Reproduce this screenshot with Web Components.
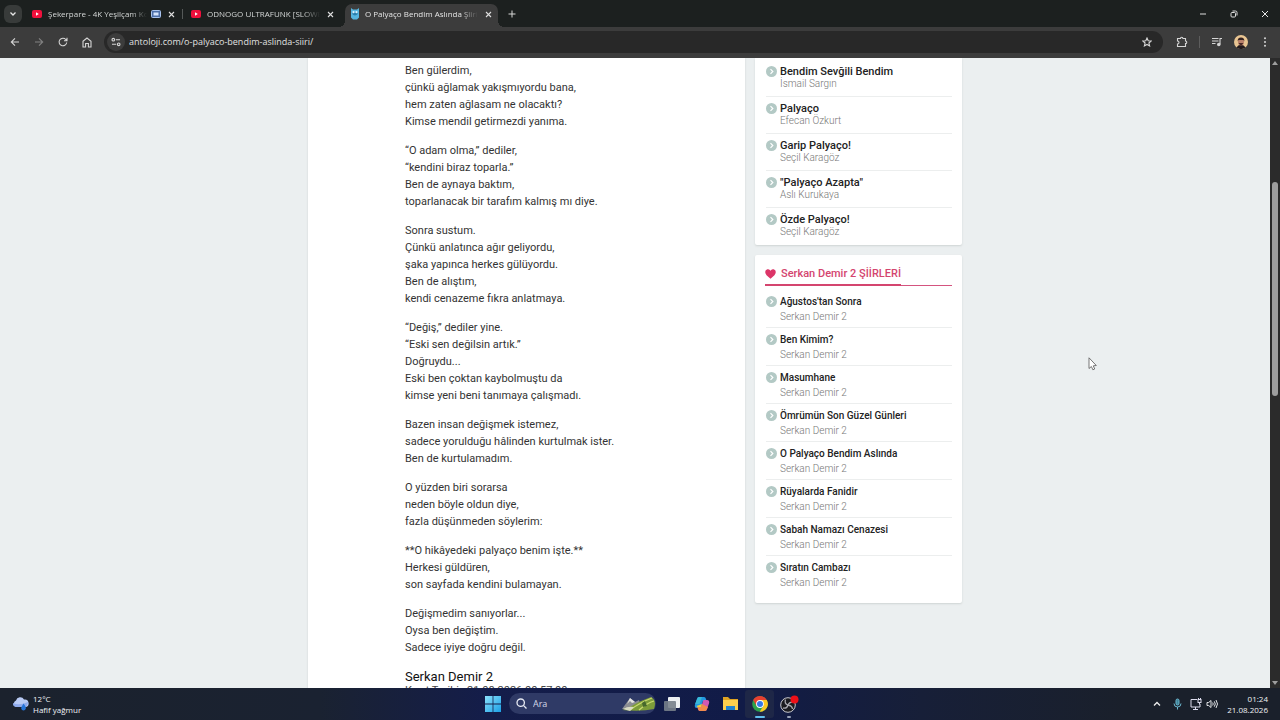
<!DOCTYPE html>
<html lang="tr">
<head>
<meta charset="utf-8">
<title>O Palyaço Bendim Aslında Şiiri</title>
<style>
html,body{margin:0;height:100%}
body{font-family:Roboto,"Open Sans",sans-serif;overflow:hidden}
</style>
</head>
<body>
<desktop-screen></desktop-screen>
<script>
const define = (name, html, setup) => {
  const template = document.createElement('template');
  template.innerHTML = html.trim();
  customElements.define(name, class extends HTMLElement {
    constructor() {
      super();
      this.attachShadow({ mode: 'open' }).append(template.content.cloneNode(true));
    }
    connectedCallback() { if (setup) setup(this, this.shadowRoot); }
  });
};

const youtube = '<svg width="10" height="8" viewBox="0 0 10 8"><rect width="10" height="8" rx="2" fill="#f0103c"/><path d="M4 2.3v3.4L6.8 4z" fill="#fff"/></svg>';
const owl = '<svg width="10" height="12" viewBox="0 0 10 12"><path d="M1 0l2 1.500h4L9 0v4.500L9 9.500 7 11.500h-4L1 9.500 1 4.500z" fill="#56b4de"/><path d="M2 4.200h6l-.8 2.500L5 7.500 2.800 6.700z" fill="#2a7fae"/><circle cx="3.500" cy="4.200" r="1.100" fill="#d9f2ff"/><circle cx="6.500" cy="4.200" r="1.100" fill="#d9f2ff"/></svg>';

define('browser-tab', `
<style>
:host{display:flex;align-items:center;box-sizing:border-box;width:159px;height:23px;padding:0 2px 3px 10px;color:#d4d7d6;font:8px "Open Sans",sans-serif;position:relative;border-radius:7px 7px 0 0}
:host([active]){background:#3c3c3c;width:153px;padding-left:5px;color:#e4e4e4;margin-left:5px}
:host([active])::before,:host([active])::after{content:"";position:absolute;bottom:0;width:6px;height:6px}
:host([active])::before{left:-6px;background:radial-gradient(circle at 0 0,transparent 6px,#3c3c3c 6px)}
:host([active])::after{right:-6px;background:radial-gradient(circle at 100% 0,transparent 6px,#3c3c3c 6px)}
.icon{display:flex;width:10px;margin-right:6px}
:host([active]) .icon{margin-right:5px}
.title{all:unset;flex:1;min-width:0;overflow:hidden;white-space:nowrap;line-height:16px;-webkit-mask-image:linear-gradient(90deg,#000 85%,transparent);mask-image:linear-gradient(90deg,#000 85%,transparent)}
.close{all:unset;display:flex;padding:4px;margin-left:3px}
.pip{display:none;margin-left:4px}
:host([pip]) .pip{display:block}
</style>
<span class="icon"><slot name="icon"></slot></span>
<button class="title"><slot></slot></button>
<svg class="pip" width="10" height="8" viewBox="0 0 10 8"><rect x=".5" y=".5" width="9" height="7" rx="1" fill="#4c6ea8" stroke="#a9c3ee"/><rect x="2.500" y="2.500" width="5" height="3" fill="#d4e3fc"/></svg>
<button class="close" aria-label="Sekmeyi kapat"><svg width="7" height="7" viewBox="0 0 7 7"><path d="M1 1l5 5M6 1L1 6" stroke="#dedede" stroke-width="1.100"/></svg></button>`);

define('tab-strip', `
<style>
:host{display:flex;align-items:flex-end;height:27px;background:#1c201f;padding-left:4px;box-sizing:border-box}
button{all:unset;display:flex;align-items:center;justify-content:center}
.menu{width:18px;height:18px;background:#383b3a;border-radius:6px;align-self:center}
.tabs{display:flex;align-items:center}
.sep{width:1px;height:10px;background:#555958;margin:0 -2px 3px 1px}
.new{width:28px;height:27px}
.space{flex:1}
.win{width:31px;height:27px}
.icon{display:flex}
</style>
<button class="menu" aria-label="Sekmelerde ara"><svg width="8" height="6" viewBox="0 0 8 6"><path d="M1.500 1.500L4 4l2.500-2.500" fill="none" stroke="#e6e6e6" stroke-width="1.300"/></svg></button>
<div class="tabs">
<browser-tab pip><span slot="icon" class="icon">${youtube}</span>Şekerpare - 4K Yeşilçam Komedi</browser-tab><i class="sep"></i>
<browser-tab><span slot="icon" class="icon">${youtube}</span>ODNOGO ULTRAFUNK [SLOWED]</browser-tab>
<browser-tab active><span slot="icon" class="icon">${owl}</span>O Palyaço Bendim Aslında Şiiri -</browser-tab>
</div>
<button class="new" aria-label="Yeni sekme"><svg width="8" height="8" viewBox="0 0 8 8"><path d="M4 .5v7M.5 4h7" stroke="#d8d8d8"/></svg></button>
<span class="space"></span>
<button class="win" aria-label="Küçült"><svg width="8" height="8" viewBox="0 0 8 8"><path d="M1 4h6" stroke="#ddd"/></svg></button>
<button class="win" aria-label="Önceki boyut"><svg width="8" height="8" viewBox="0 0 8 8" fill="none" stroke="#ddd"><rect x="1" y="2.500" width="4.500" height="4.500" rx="1"/><path d="M2.500 1h3Q7 1 7 2.500v3"/></svg></button>
<button class="win" aria-label="Kapat"><svg width="8" height="8" viewBox="0 0 8 8"><path d="M1 1l6 6M7 1L1 7" stroke="#e6e6e6"/></svg></button>`);

define('browser-toolbar', `
<style>
:host{display:flex;align-items:center;height:31px;background:#3c3c3c;padding:0 3px 1px;box-sizing:border-box}
button{all:unset;display:flex;align-items:center;justify-content:center;width:24px;height:24px}
.bar{flex:1;display:flex;align-items:center;height:22px;background:#282828;border-radius:11px;margin:0 7px 0 5px;padding-left:3px;min-width:0}
.site{width:18px;height:18px;border-radius:9px;background:#3c3c3c}
input{all:unset;flex:1;min-width:0;margin-left:4px;color:#e0e0e0;font:9px/16px "Open Sans",sans-serif}
.star{width:32px}
.sep{width:1px;height:12px;background:#5d5d5d;margin:0 5px}
svg{fill:none;stroke:#d6d6d6;stroke-width:1.100}
</style>
<button aria-label="Geri"><svg width="10" height="10" viewBox="0 0 10 10"><path d="M9 5H1.500M5 1.300L1.300 5 5 8.700"/></svg></button>
<button aria-label="İleri"><svg width="10" height="10" viewBox="0 0 10 10" style="stroke:#828282"><path d="M1 5h7.500M5 1.300L8.700 5 5 8.700"/></svg></button>
<button aria-label="Yenile"><svg width="10" height="10" viewBox="0 0 10 10"><path d="M8.700 5.500A3.800 3.800 0 1 1 7.800 2.500L9 3.700M9 .7v3H6"/></svg></button>
<button aria-label="Ana sayfa"><svg width="10" height="11" viewBox="0 0 10 11"><path d="M1 4.200L5 1l4 3.200V10H6.400V6.500H3.600V10H1z"/></svg></button>
<div class="bar">
<button class="site" aria-label="Site bilgileri"><svg width="10" height="10" viewBox="0 0 10 10"><circle cx="2.300" cy="2.700" r="1.300"/><path d="M4.800 2.700H9M1 7.300h4.200"/><circle cx="7.700" cy="7.300" r="1.300"/></svg></button>
<input aria-label="Adres" value="antoloji.com/o-palyaco-bendim-aslinda-siiri/">
<button class="star" aria-label="Yer işareti"><svg width="10" height="10" viewBox="0 0 10 10"><path d="M5 1l1.200 2.700 3 .3-2.300 2 .7 2.900L5 7.400 2.400 8.900l.7-2.900L.8 4l3-.3z"/></svg></button>
</div>
<button aria-label="Uzantılar"><svg width="12" height="12" viewBox="0 0 12 12"><path d="M1.500 2.500H4.500a1.200 1.200 0 0 1 2.400 0H9.500V5a1.300 1.300 0 0 1 0 2.600V10.500H1.500V8a1.500 1.500 0 0 0 0-3z"/></svg></button>
<i class="sep"></i>
<button aria-label="Medya"><svg width="12" height="10" viewBox="0 0 12 10"><path d="M1 1.500h6.500M1 4h6.500M1 6.500h3.500M9 7.500V1.500h2"/><circle cx="7.800" cy="7.500" r="1.200" fill="#d6d6d6"/></svg></button>
<button aria-label="Profil"><svg width="14" height="14" viewBox="0 0 14 14" style="stroke:none"><circle cx="7" cy="7" r="7" fill="#e9c592"/><path d="M2.500 12.400Q4 9.500 7 9.700t4.500 2.700A7 7 0 0 1 2.500 12.400z" fill="#221a1c"/><ellipse cx="7" cy="6.800" rx="3" ry="3.700" fill="#b9806a"/><path d="M3.700 6.500Q3.400 2.500 7 2.500t3.300 4L9.500 5h-5z" fill="#352322"/><path d="M4.500 8h5L7 11z" fill="#4b2b28"/></svg></button>
<button aria-label="Menü"><svg width="4" height="10" viewBox="0 0 4 10" style="fill:#d6d6d6;stroke:none"><circle cx="2" cy="1.300" r="1"/><circle cx="2" cy="5" r="1"/><circle cx="2" cy="8.700" r="1"/></svg></button>`);

define('poem-stanza', `
<style>:host{display:block;white-space:pre-line;margin-bottom:12px;font-size:11px;line-height:17px;color:#333}</style><slot></slot>`);

define('poem-card', `
<style>
:host{display:block;background:#fff;padding:4px 97px 0;box-shadow:0 0 2px #cfd4d4;min-width:0}
h2{margin:0;font:400 13px/18px Roboto,sans-serif;color:#111}
p{margin:0;font-size:11px;line-height:10px;color:#444}
</style>
<poem-stanza>Ben gülerdim,
çünkü ağlamak yakışmıyordu bana,
hem zaten ağlasam ne olacaktı?
Kimse mendil getirmezdi yanıma.</poem-stanza>
<poem-stanza>“O adam olma,” dediler,
“kendini biraz toparla.”
Ben de aynaya baktım,
toparlanacak bir tarafım kalmış mı diye.</poem-stanza>
<poem-stanza>Sonra sustum.
Çünkü anlatınca ağır geliyordu,
şaka yapınca herkes gülüyordu.
Ben de alıştım,
kendi cenazeme fıkra anlatmaya.</poem-stanza>
<poem-stanza>“Değiş,” dediler yine.
“Eski sen değilsin artık.”
Doğruydu...
Eski ben çoktan kaybolmuştu da
kimse yeni beni tanımaya çalışmadı.</poem-stanza>
<poem-stanza>Bazen insan değişmek istemez,
sadece yorulduğu hâlinden kurtulmak ister.
Ben de kurtulamadım.</poem-stanza>
<poem-stanza>O yüzden biri sorarsa
neden böyle oldun diye,
fazla düşünmeden söylerim:</poem-stanza>
<poem-stanza>**O hikâyedeki palyaço benim işte.**
Herkesi güldüren,
son sayfada kendini bulamayan.</poem-stanza>
<poem-stanza>Değişmedim sanıyorlar...
Oysa ben değiştim.
Sadece iyiye doğru değil.</poem-stanza>
<h2>Serkan Demir 2</h2>
<p>Kayıt Tarihi : 21.08.2026 00:57:00</p>`);

define('poem-link', `
<style>
:host{display:grid;grid-template-columns:14px minmax(0,1fr);padding:6px 0;border-bottom:1px solid #eceeee;font-size:11px;line-height:12px}
:host([roomy]){padding:4px 0 3px;font-size:10px;line-height:15px}
:host([last]){border-bottom-color:transparent}
svg{width:11px;height:11px}
:host([roomy]) svg{margin-top:2px}
a{color:#222;font-weight:500;text-decoration:none}
.by{font-weight:300;font-size:10px;color:#777;grid-column:2}
</style>
<svg viewBox="0 0 11 11"><circle cx="5.500" cy="5.500" r="5.500" fill="#b3c9c5"/><path d="M4.500 3.200L6.800 5.500 4.500 7.800" fill="none" stroke="#fff" stroke-width="1.200"/></svg>
<a href="#"><slot></slot></a>
<span class="by"><slot name="by"></slot></span>`);

define('side-card', `
<style>
:host{display:block;background:#fff;padding:11px 10px 9px;box-shadow:0 1px 2px #cfd4d4;border-radius:2px}
:host([continued]){padding-top:2px;padding-bottom:0;border-radius:0 0 2px 2px}
header{display:none}
:host([heading]) header{display:block;border-bottom:1px solid #d4547f;margin-bottom:4px;height:19px}
h3{display:inline-flex;align-items:flex-start;gap:5px;margin:0;height:18px;border-bottom:2px solid #d4456f;font:500 11px/16px Roboto,sans-serif;color:#d4456f;vertical-align:top}
h3 svg{margin-top:3px}
.list{padding-left:1px}
</style>
<header><h3><svg width="11" height="10" viewBox="0 0 11 10"><path d="M5.500 9.700C2 7 .2 5.200.2 3A2.800 2.800 0 0 1 5.500 1.700 2.800 2.800 0 0 1 10.800 3C10.800 5.200 9 7 5.500 9.700z" fill="#dc3568"/></svg><span></span></h3></header>
<div class="list"><slot></slot></div>`,
(host, root) => { root.querySelector('h3 span').textContent = host.getAttribute('heading') || ''; });

const links = (rows, extra = '') => rows.map(([title, by], i) =>
  `<poem-link ${extra} ${i === rows.length - 1 ? 'last' : ''}>${title}<span slot="by">${by}</span></poem-link>`).join('');
const author = 'Serkan Demir 2';

define('site-page', `
<style>
:host{display:flex;flex:1;min-height:0;background:#ebeff0;overflow:hidden}
.view{flex:1;overflow:hidden;min-width:0}
.cols{display:grid;grid-template-columns:minmax(0,1fr) 207px;gap:10px;max-width:654px;margin:0 auto}
aside{display:flex;flex-direction:column;gap:10px}
.scroll{width:10px;background:#2b2b2b;display:flex;flex-direction:column;align-items:center}
.track{flex:1;width:6px;display:grid;grid-template-rows:187fr 350fr 463fr}
.thumb{grid-row:2;background:#9e9e9e;border-radius:3px}
svg{margin:2px 0}
</style>
<div class="view"><div class="cols">
<poem-card></poem-card>
<aside>
<side-card continued>${links([['Bendim Sevğili Bendim','İsmail Sargın'],['Palyaço','Efecan Özkurt'],['Garip Palyaço!','Seçil Karagöz'],['"Palyaço Azapta"','Aslı Kurukaya'],['Özde Palyaço!','Seçil Karagöz']])}</side-card>
<side-card heading="Serkan Demir 2 ŞİİRLERİ">${links(["Ağustos'tan Sonra",'Ben Kimim?','Masumhane','Ömrümün Son Güzel Günleri','O Palyaço Bendim Aslında','Rüyalarda Fanidir','Sabah Namazı Cenazesi','Sıratın Cambazı'].map(t => [t, author]), 'roomy')}</side-card>
</aside>
</div></div>
<div class="scroll"><svg width="6" height="6" viewBox="0 0 6 6"><path d="M3 1l3 4H0z" fill="#9e9e9e"/></svg><div class="track"><div class="thumb"></div></div><svg width="6" height="6" viewBox="0 0 6 6"><path d="M3 5l3-4H0z" fill="#9e9e9e"/></svg></div>`);

define('task-bar', `
<style>
:host{display:grid;grid-template-columns:1fr auto 1fr;align-items:center;height:32px;padding-bottom:1px;box-sizing:border-box;color:#f0f2f5;font:8px/11px "Open Sans",sans-serif;background:linear-gradient(90deg,#1b222d 0,#1a2231 25%,#141d4a 38%,#111b47 58%,#171f38 72%,#1a202b 88%)}
button{all:unset;display:flex;align-items:center;justify-content:center;height:28px;position:relative}
.weather{justify-self:start;padding-left:12px;gap:4px}
.weather span{display:grid}
.mid{display:flex;align-items:center}
.app{width:29px}
.start{width:31px}
label{display:flex;align-items:center;width:147px;height:21px;border-radius:11px;background:#2f3a66;box-sizing:border-box;padding-left:7px;margin:0 2px 0 1px;overflow:hidden}
input{all:unset;flex:1;min-width:0;margin-left:6px;font:9px/14px "Open Sans",sans-serif}
input::placeholder{color:#d3d8e8;opacity:1}
.open::after{content:"";position:absolute;bottom:0;width:4px;height:2px;border-radius:1px;background:#9aa3b8}
.current{background:#1e2747;border-radius:3px}
.current::after{width:10px;background:#60bfee}
.tray{justify-self:end;display:flex;align-items:center;padding-right:12px}
.tray button{width:20px}
.tray .net{width:18px}
.tray .clock{display:grid;text-align:right;width:auto;margin-left:8px;align-content:center}
.tray .snd{width:14px}
</style>
<button class="weather"><svg width="17" height="16" viewBox="0 0 17 16"><path d="M4 11A3.500 3.500 0 0 1 4 4.500 4.300 4.300 0 0 1 12 3.500 3.700 3.700 0 0 1 13.500 11z" fill="#b9cbf5"/><path d="M4 11a3.500 3.500 0 0 1-3-4q6 3 15-1-.3 4-2.500 5z" fill="#8fabec"/><path d="M11.500 7.500q3 3.700 2.300 5.300a2.400 2.400 0 0 1-4.600 0Q9 11 11.500 7.500z" fill="#2574d8"/></svg><span><span>12°C</span><span>Hafif yağmur</span></span></button>
<div class="mid">
<button class="start" aria-label="Başlat"><svg width="16" height="16" viewBox="0 0 16 16"><defs><linearGradient id="w" x2="1" y2="1"><stop stop-color="#8be1fb"/><stop offset="1" stop-color="#1ba0e6"/></linearGradient></defs><path d="M0 0h7.600v7.600H0zM8.400 0H16v7.600H8.400zM0 8.400h7.600V16H0zM8.400 8.400H16V16H8.400z" fill="url(#w)"/></svg></button>
<label><svg width="11" height="11" viewBox="0 0 11 11" fill="none" stroke="#e6e9f2" stroke-width="1.300"><circle cx="4.700" cy="4.700" r="3.700"/><path d="M7.400 7.400L10.500 10.500"/></svg><input aria-label="Ara" placeholder="Ara">
<svg width="35" height="17" viewBox="0 0 35 17"><path d="M1 14L9 3l5 4 4-2 3 9z" fill="#8b8d92"/><path d="M9 3l5 4-3 1-2-2-3 3z" fill="#e5e5e2"/><path d="M5 14Q16 8 20 6L30 2Q36 5 33 14Q20 17 1 15z" fill="#7d9c3a"/><path d="M9 15Q20 7 31 3M18 15Q26 8 33 6" fill="none" stroke="#cadb70" stroke-width="1.300"/><path d="M2 14q5-3 11-2l-4 4z" fill="#d9dac4"/><path d="M21 8l3-2 2 5-4 1z" fill="#46682c"/></svg></label>
<button class="app" aria-label="Görev görünümü"><svg width="18" height="16" viewBox="0 0 18 16"><rect x="4" y="1" width="12" height="11" rx="1" fill="#edf0f2"/><rect x="0" y="5" width="12" height="10" rx="1" fill="#777f8a" opacity=".9"/></svg></button>
<button class="app" aria-label="Copilot"><svg width="16" height="16" viewBox="0 0 16 16"><path d="M5 1h5q1.500 0 2 2l.5 2H9L6.500 12H3Q0 12 1 8.500L3 3Q3.500 1 5 1z" fill="#2398e2"/><path d="M3 3Q3.500 1 5 1h3L5.500 8 1.200 8z" fill="#39b9d8"/><path d="M11 15H6q-1.500 0-2-2l-.5-2H7L9.500 4H13q3 0 2 3.500L13 13q-.5 2-2 2z" fill="#d15ab3"/><path d="M11 15H6q-1.500 0-2-2l-.5-2H7l1-3 6 3-1 2q-.5 2-2 2z" fill="#f28b4b"/><path d="M3.500 11H7l1-3-5.500 2z" fill="#e9ce45"/></svg></button>
<button class="app" aria-label="Dosya Gezgini"><svg width="17" height="15" viewBox="0 0 17 15"><path d="M1 1h5l2 2h8v4H1z" fill="#dfa322"/><path d="M1 4h15v10H1z" fill="#fccf4d"/><path d="M4 14v-4h9v4z" fill="#2183cf"/></svg></button>
<button class="app open current" aria-label="Chrome"><svg width="16" height="16" viewBox="0 0 16 16"><circle cx="8" cy="8" r="7.800" fill="#2ca34c"/><path d="M1.200 4.100A7.800 7.800 0 0 1 14.800 4.100H8L4.600 10z" fill="#e8402f"/><path d="M14.800 4.100A7.800 7.800 0 0 1 7.700 15.800L11.400 10 8 4.100z" fill="#fcc823"/><circle cx="8" cy="8" r="3.900" fill="#fff"/><circle cx="8" cy="8" r="3" fill="#3579e8"/></svg></button>
<button class="app open" aria-label="OBS"><svg width="20" height="18" viewBox="0 0 20 18"><circle cx="9" cy="10" r="7.300" fill="#1b1b20" stroke="#c9c9cf"/><path d="M6.500 4.500q-1.500 4 2.500 5.500 4 .5 4.500 4M9 10q-1 4-5 3M9 10q2-4 5.500-2.500" fill="none" stroke="#a9a9b0" stroke-width="1.300"/><circle cx="15.500" cy="4.500" r="4" fill="#ef1018"/></svg></button>
</div>
<div class="tray">
<button aria-label="Gizli simgeler"><svg width="8" height="6" viewBox="0 0 8 6"><path d="M1 4.500L4 1.500l3 3" fill="none" stroke="#eee" stroke-width="1.300"/></svg></button>
<button aria-label="Mikrofon"><svg width="9" height="12" viewBox="0 0 9 12" fill="none" stroke="#6cb8d0"><rect x="3" y="1" width="3" height="6" rx="1.500" fill="#3f8297"/><path d="M1 5.500q0 3.500 3.500 3.500T8 5.500M4.500 9v2.500"/></svg></button>
<button class="net" aria-label="Ağ"><svg width="12" height="12" viewBox="0 0 12 12" fill="none" stroke="#dde"><path d="M7 1.500H1v7.500h9V6M3 11.500h5M5.500 9v2"/><rect x="8" y="1.500" width="3" height="3"/><path d="M9.500 4.500v2M8.500 0v1.500M10.500 0v1.500"/></svg></button>
<button class="snd" aria-label="Ses"><svg width="12" height="10" viewBox="0 0 12 10" fill="none" stroke="#e3e5e8"><path d="M1 3.500h1.700L5 1.500v7L2.700 6.500H1zM6.700 3.500q1 1.500 0 3M8.300 2.300q2 2.700 0 5.400M10 1q3 4 0 8"/></svg></button>
<button class="clock"><span>01:24</span><span>21.08.2026</span></button>
</div>`);

define('mouse-pointer', `
<style>:host{position:absolute;left:85%;top:356px;display:block}</style>
<svg width="9" height="14" viewBox="0 0 9 14"><path d="M1 .8v10.700l2.400-2 1.500 3.300 1.800-.8-1.400-3.200 3-.3z" fill="#fff" stroke="#555" stroke-width=".8"/></svg>`);

define('desktop-screen', `
<style>:host{display:flex;flex-direction:column;height:100vh;position:relative;background:#ebeff0}</style>
<tab-strip></tab-strip><browser-toolbar></browser-toolbar><site-page></site-page><task-bar></task-bar><mouse-pointer></mouse-pointer>`);
</script>
</body>
</html>
